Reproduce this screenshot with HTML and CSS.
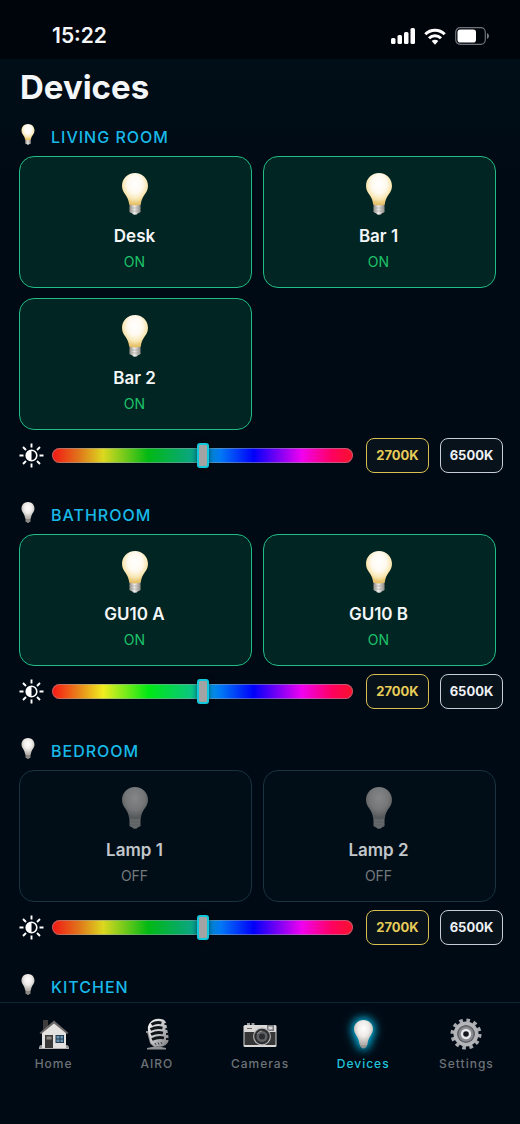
FILE: index.html
```html
<!DOCTYPE html>
<html lang="en">
<head>
    <meta charset="UTF-8">
    <meta name="viewport" content="width=device-width, initial-scale=1.0">
    <title>Devices</title>
    <link rel="stylesheet" href="styles.css">
</head>
<body>
    <svg class="defs" width="0" height="0" aria-hidden="true">
        <defs>
            <radialGradient id="glowOn" cx="50%" cy="34%" r="62%">
                <stop offset="0" stop-color="#ffffff"/>
                <stop offset="0.45" stop-color="#fffaf0"/>
                <stop offset="0.75" stop-color="#f8e7b4"/>
                <stop offset="1" stop-color="#e6c068"/>
            </radialGradient>
            <radialGradient id="glowOff" cx="50%" cy="34%" r="60%">
                <stop offset="0" stop-color="#ffffff"/>
                <stop offset="0.5" stop-color="#eeebe8"/>
                <stop offset="1" stop-color="#b5b0ab"/>
            </radialGradient>
            <radialGradient id="glowDim" cx="50%" cy="34%" r="60%">
                <stop offset="0" stop-color="#858687"/>
                <stop offset="0.6" stop-color="#747677"/>
                <stop offset="1" stop-color="#56595b"/>
            </radialGradient>
            <linearGradient id="capMetal">
                <stop offset="0" stop-color="#8d8983"/>
                <stop offset="0.45" stop-color="#efedeb"/>
                <stop offset="1" stop-color="#8d8983"/>
            </linearGradient>
            <linearGradient id="silver" x1="0" y1="0" x2="1" y2="1">
                <stop offset="0" stop-color="#ffffff"/>
                <stop offset="0.5" stop-color="#c4c5c8"/>
                <stop offset="1" stop-color="#77797d"/>
            </linearGradient>
            <symbol id="bulb-on" viewBox="0 0 26 42">
                <path d="M7.500 31h11v8q-1 1-2.500 1.200q-1 1.500-3 1.500t-3-1.500q-1.500-.2-2.500-1.200z" fill="url(#capMetal)"/>
                <path d="M7.500 35h11M7.500 38h11" stroke="#a39f99" stroke-width="0.600"/>
                <path d="M13 0C5.500 0 0 5.700 0 12.800C0 20.500 6.500 22.500 7.200 31.500Q10 32.500 13 32.500T18.800 31.500C19.500 22.500 26 20.500 26 12.800C26 5.700 20.500 0 13 0Z" fill="url(#glowOn)"/>
            </symbol>
            <symbol id="bulb-off" viewBox="0 0 26 42">
                <path d="M8 31h10v8q-1 1-2 1.200q-1 1.800-3 1.800t-3-1.800q-1-.2-2-1.200z" fill="#8b8782"/>
                <path d="M13 0C5.500 0 0 5.700 0 12.800C0 20.500 6.500 22.500 7.200 32.500Q10 34.200 13 34.200T18.800 32.500C19.500 22.500 26 20.500 26 12.800C26 5.700 20.500 0 13 0Z" fill="url(#glowOff)"/>
            </symbol>
            <symbol id="bulb-dim" viewBox="0 0 26 42">
                <path d="M7.500 31h11v8q-1 1-2.500 1.200q-1 1.500-3 1.500t-3-1.500q-1.500-.2-2.500-1.200z" fill="#66696a"/>
                <path d="M7.500 35h11M7.500 38h11" stroke="#55585a" stroke-width="0.600"/>
                <path d="M13 0C5.500 0 0 5.700 0 12.800C0 20.500 6.500 22.500 7.200 31.500Q10 32.500 13 32.500T18.800 31.500C19.500 22.500 26 20.500 26 12.800C26 5.700 20.500 0 13 0Z" fill="url(#glowDim)"/>
            </symbol>
            <symbol id="sun" viewBox="0 0 25 25">
                <g fill="none" stroke="#ffffff" stroke-width="1.900">
                    <path d="M12.500 0.500v4M12.500 20.500v4M0.500 12.500h4M20.500 12.500h4M4 4l3 3M18 18l3 3M4 21l3-3M18 7l3-3"/>
                    <circle cx="12.500" cy="12.500" r="5.300" stroke-width="1.600"/>
                </g>
                <path d="M12.500 7.200a5.300 5.300 0 0 0 0 10.600z" fill="#ffffff"/>
            </symbol>
        </defs>
    </svg>

    <header class="status-bar">
        <span class="time">15:22</span>
        <div class="status-icons">
            <svg width="24" height="16" viewBox="0 0 24 16" fill="#ffffff">
                <rect x="0" y="10" width="4.500" height="6" rx="1.500"/>
                <rect x="6.500" y="7" width="4.500" height="9" rx="1.500"/>
                <rect x="13" y="4" width="4.500" height="12" rx="1.500"/>
                <rect x="19.500" y="0" width="4.500" height="16" rx="1.500"/>
            </svg>
            <svg width="22" height="17" viewBox="0 0 22 17">
                <g fill="none" stroke="#ffffff" stroke-width="3">
                    <path d="M1.300 6.200a13.800 13.800 0 0 1 19.400 0"/>
                    <path d="M5 10.200a8.600 8.600 0 0 1 12 0"/>
                </g>
                <path d="M7.700 13a4.700 4.700 0 0 1 6.600 0L11 16.800z" fill="#ffffff"/>
            </svg>
            <svg width="34" height="18" viewBox="0 0 34 18">
                <rect x="0.700" y="0.700" width="29.600" height="16.600" rx="4.500" fill="none" stroke="#6f7479" stroke-width="1.200"/>
                <rect x="2.500" y="2.500" width="18.500" height="13" rx="2.800" fill="#ffffff"/>
                <path d="M32 6q2 1 2 3t-2 3z" fill="#7d8186"/>
            </svg>
        </div>
    </header>

    <main>
        <h1>Devices</h1>

        <section class="room">
            <h2><svg class="room-icon"><use href="#bulb-on"/></svg>LIVING ROOM</h2>
            <div class="cards">
                <button class="card on">
                    <svg class="bulb"><use href="#bulb-on"/></svg>
                    <span class="name">Desk</span>
                    <span class="state">ON</span>
                </button>
                <button class="card on">
                    <svg class="bulb"><use href="#bulb-on"/></svg>
                    <span class="name">Bar 1</span>
                    <span class="state">ON</span>
                </button>
                <button class="card on">
                    <svg class="bulb"><use href="#bulb-on"/></svg>
                    <span class="name">Bar 2</span>
                    <span class="state">ON</span>
                </button>
            </div>
            <div class="controls">
                <svg class="sun"><use href="#sun"/></svg>
                <input type="range" class="hue" min="0" max="360" value="181" aria-label="Living room colour">
                <button class="temp warm">2700K</button>
                <button class="temp cool">6500K</button>
            </div>
        </section>

        <section class="room">
            <h2><svg class="room-icon"><use href="#bulb-off"/></svg>BATHROOM</h2>
            <div class="cards">
                <button class="card on">
                    <svg class="bulb"><use href="#bulb-on"/></svg>
                    <span class="name">GU10 A</span>
                    <span class="state">ON</span>
                </button>
                <button class="card on">
                    <svg class="bulb"><use href="#bulb-on"/></svg>
                    <span class="name">GU10 B</span>
                    <span class="state">ON</span>
                </button>
            </div>
            <div class="controls">
                <svg class="sun"><use href="#sun"/></svg>
                <input type="range" class="hue bright" min="0" max="360" value="181" aria-label="Bathroom colour">
                <button class="temp warm">2700K</button>
                <button class="temp cool">6500K</button>
            </div>
        </section>

        <section class="room">
            <h2><svg class="room-icon"><use href="#bulb-off"/></svg>BEDROOM</h2>
            <div class="cards">
                <button class="card">
                    <svg class="bulb"><use href="#bulb-dim"/></svg>
                    <span class="name">Lamp 1</span>
                    <span class="state">OFF</span>
                </button>
                <button class="card">
                    <svg class="bulb"><use href="#bulb-dim"/></svg>
                    <span class="name">Lamp 2</span>
                    <span class="state">OFF</span>
                </button>
            </div>
            <div class="controls">
                <svg class="sun"><use href="#sun"/></svg>
                <input type="range" class="hue" min="0" max="360" value="181" aria-label="Bedroom colour">
                <button class="temp warm">2700K</button>
                <button class="temp cool">6500K</button>
            </div>
        </section>

        <section class="room">
            <h2><svg class="room-icon"><use href="#bulb-off"/></svg>KITCHEN</h2>
        </section>
    </main>

    <nav class="tab-bar">
        <a href="#home">
            <svg width="32" height="32" viewBox="0 0 32 32">
                <rect x="5" y="2" width="5" height="10" fill="#3d3b3c"/>
                <path d="M4 14L16 4l12 10v16H4z" fill="#e4e2e1"/>
                <path d="M1.500 15L16 2.500L30.500 15l-1.500 1L16 5.500L3 16z" fill="#6c6767"/>
                <rect x="7" y="17" width="8" height="13" fill="#3a3938"/>
                <rect x="8.500" y="18.500" width="5" height="3" fill="#8d8b88"/>
                <rect x="17.500" y="17" width="8.500" height="8" fill="#243d50"/>
                <path d="M18.500 18h3v2.500h-3zM22.500 18h2.500v2.500h-2.500zM18.500 21.500h3v2.500h-3zM22.500 21.500h2.500v2.500h-2.500z" fill="#6793b0"/>
                <path d="M1 31q-.5-4 3-4v3h11v1zM15 30h13v-3q3.500 0 3 4H15z" fill="#9b9998"/>
                <path d="M1 30.500h30" stroke="#b2b0af"/>
            </svg>
            Home
        </a>
        <a href="#airo">
            <svg width="32" height="32" viewBox="0 0 32 32">
                <path d="M5 14l2 0l3 11l5 4.500" fill="none" stroke="#8c8c8e" stroke-width="2"/>
                <path d="M6 30q10-2.500 19 0v1.500H6z" fill="#8f9092"/>
                <path d="M8 6Q12 0 20 1q5 .5 5.500 6l2 12q1 8-6.500 9.500q-9 1.500-11.500-4.500L7 13q-1-4 1-7z" fill="url(#silver)"/>
                <g fill="none" stroke="#10151a" stroke-width="2.800">
                    <path d="M10.500 6.500q5-3 10-1.500M9.500 11.500q6-3 12-1.500M10 16.500q6-3 12-1.500M11 21.500q6-3 12-1.500"/>
                </g>
                <g fill="none" stroke="#10151a" stroke-width="2">
                    <path d="M23.500 6l2.500 0M24.500 11l2.500 0M25 16l3 0M25 21l3 0"/>
                </g>
                <path d="M14 25l1 2M17 24.500l1 2M20 24l1 2" stroke="#3b3e42"/>
            </svg>
            AIRO
        </a>
        <a href="#cameras">
            <svg width="34" height="32" viewBox="0 0 34 32">
                <path d="M4 5h3v3H4zM8.500 5h3v3h-3z" fill="#9a9a9b"/>
                <rect x="0.500" y="7" width="33" height="22" rx="1.500" fill="#dad9d8"/>
                <rect x="24" y="7" width="7" height="6" fill="#77787a"/>
                <rect x="25.500" y="8.500" width="4" height="3" fill="#d6d6d6"/>
                <rect x="1.500" y="14" width="31" height="13" fill="#373637"/>
                <path d="M4 10.500h5" stroke="#6a6765"/>
                <circle cx="19" cy="18.500" r="9" fill="#b4b4b5"/>
                <circle cx="19" cy="18.500" r="7.800" fill="#2e3032"/>
                <circle cx="19" cy="18.500" r="5.500" fill="#5e6063"/>
                <circle cx="19" cy="18.500" r="3" fill="#2b2c30"/>
                <path d="M14.500 16q1.500-3 4.500-3" fill="none" stroke="#9b9da0"/>
            </svg>
            Cameras
        </a>
        <a href="#devices" class="active">
            <svg width="32" height="32" viewBox="0 0 32 32">
                <path d="M13 22h7v6q-3.500 5-7 0z" fill="#8c9290"/>
                <path d="M16.500 2C11 2 7 6 7 11C7 16.500 11.800 18 12.500 26.500q4 2 8 0C21.200 18 26 16.500 26 11C26 6 22 2 16.500 2z" fill="url(#glowOff)"/>
            </svg>
            Devices
        </a>
        <a href="#settings">
            <svg width="32" height="32" viewBox="0 0 32 32">
                <circle cx="16" cy="16" r="13.700" fill="none" stroke="#a9aaaf" stroke-width="3.600" stroke-dasharray="3.600 3.573"/>
                <circle cx="16" cy="16" r="10.500" fill="none" stroke="#b4b5b9" stroke-width="4"/>
                <circle cx="16" cy="16" r="8.800" fill="#606268"/>
                <circle cx="16" cy="16" r="7.500" fill="#898b91"/>
                <circle cx="16" cy="16" r="4" fill="#14171b" stroke="#e8e8ea" stroke-width="2.400"/>
            </svg>
            Settings
        </a>
    </nav>
</body>
</html>
```
FILE: styles.css
```css
* {
    box-sizing: border-box;
}

body {
    margin: 0;
    height: 100vh;
    display: flex;
    flex-direction: column;
    background: #000a14;
    color: #f4f6f8;
    font-family: Inter, "Liberation Sans", sans-serif;
}

.defs {
    position: absolute;
}

button {
    font-family: inherit;
    cursor: pointer;
}

/* Status bar */
.status-bar {
    display: flex;
    justify-content: space-between;
    align-items: center;
    flex-shrink: 0;
    padding: 24px 31px 11px 52px;
    background: #00040b;
}

.time {
    font-size: 21px;
    line-height: 24px;
    font-weight: 600;
}

.status-icons {
    display: flex;
    align-items: center;
    gap: 9px;
}

/* Device list */
main {
    flex: 1;
    min-height: 0;
    overflow-y: auto;
    scrollbar-width: none;
    padding: 8px 17px 0 19px;
    background: linear-gradient(#000e18, #000a14 120px);
}

h1 {
    margin: 0 0 12px;
    padding-left: 1px;
    font-size: 33px;
    line-height: 40px;
    font-weight: 700;
}

.room {
    margin-bottom: 24px;
}

h2 {
    display: flex;
    align-items: center;
    gap: 16px;
    height: 37px;
    margin: 0;
    padding: 0 0 2px 2px;
    color: #18b9e8;
    font-size: 16px;
    font-weight: 500;
    letter-spacing: 1px;
}

.room-icon {
    width: 14px;
    height: 21px;
    margin-bottom: 4px;
}

.cards {
    display: grid;
    grid-template-columns: 1fr 1fr;
    gap: 10px 11px;
    padding-right: 7px;
}

.card {
    display: flex;
    flex-direction: column;
    align-items: center;
    padding: 16px 2px 15px 0;
    border: 1px solid #1b333e;
    border-radius: 15px;
    background: #010e17;
    color: #c3c7cb;
}

.bulb {
    width: 26px;
    height: 42px;
    margin-bottom: 9px;
}

.name {
    font-size: 17px;
    line-height: 24px;
    font-weight: 600;
}

.state {
    margin-top: 4px;
    font-size: 14px;
    line-height: 20px;
    color: #74797e;
}

.card.on {
    border-color: #22bd86;
    background: #012522;
    color: #f4f6f8;
}

.card.on .state {
    color: #1dc36a;
}

/* Colour controls */
.controls {
    display: flex;
    align-items: center;
    margin-top: 8px;
}

.sun {
    flex-shrink: 0;
    width: 25px;
    height: 25px;
    margin-right: 8px;
}

.hue {
    --track: linear-gradient(90deg, #f31515, #e0761a 9%, #dcd820 17%, #00b914 32%, #0aa67e 46%, #0088c8 52%, #0078f5 56%, #0000fa 67%, #f000f0 83%, #ff0060 93%, #f8122a);
    appearance: none;
    flex: 1;
    min-width: 0;
    height: 25px;
    margin: 0 13px 0 0;
    background: transparent;
}

.hue.bright {
    --track: linear-gradient(90deg, #f81515, #e8861a 9%, #f0ee20 17%, #00e814 32%, #0ac67e 46%, #0098d8 52%, #0078f5 56%, #0000fa 67%, #f000f0 83%, #ff0060 93%, #f8122a);
}

.hue::-webkit-slider-runnable-track {
    height: 15px;
    border-radius: 8px;
    background: var(--track);
    box-shadow: inset 0 0 0 1px rgba(150, 160, 170, 0.5);
}

.hue::-webkit-slider-thumb {
    appearance: none;
    width: 12px;
    height: 25px;
    margin-top: -5px;
    border: 2px solid #12c8dc;
    border-radius: 3px;
    background: #a3a3a3;
    box-shadow: 0 0 5px rgba(0, 0, 0, 0.5);
}

.temp {
    width: 63px;
    height: 35px;
    padding: 0 0 1px;
    border: 1px solid #d9bf52;
    border-radius: 8px;
    background: #07121a;
    color: #e8cc58;
    font-size: 13px;
    font-weight: 700;
}

.temp.cool {
    margin-left: 11px;
    border-color: #c8cdd6;
    color: #eef0f4;
}

/* Bottom tabs */
.tab-bar {
    display: flex;
    flex-shrink: 0;
    padding: 15px 2px 52px;
    border-top: 1px solid #0c2630;
    background: #000a14;
}

.tab-bar a {
    flex: 1 1 0;
    display: flex;
    flex-direction: column;
    align-items: center;
    gap: 6px;
    color: #6d7277;
    font-size: 12px;
    line-height: 16px;
    font-weight: 500;
    letter-spacing: 1px;
    text-decoration: none;
}

.tab-bar .active {
    color: #22c4da;
}

.active svg {
    overflow: visible;
    filter: drop-shadow(0 0 5px #00b4dc) drop-shadow(0 0 5px #0090b8);
}
```
